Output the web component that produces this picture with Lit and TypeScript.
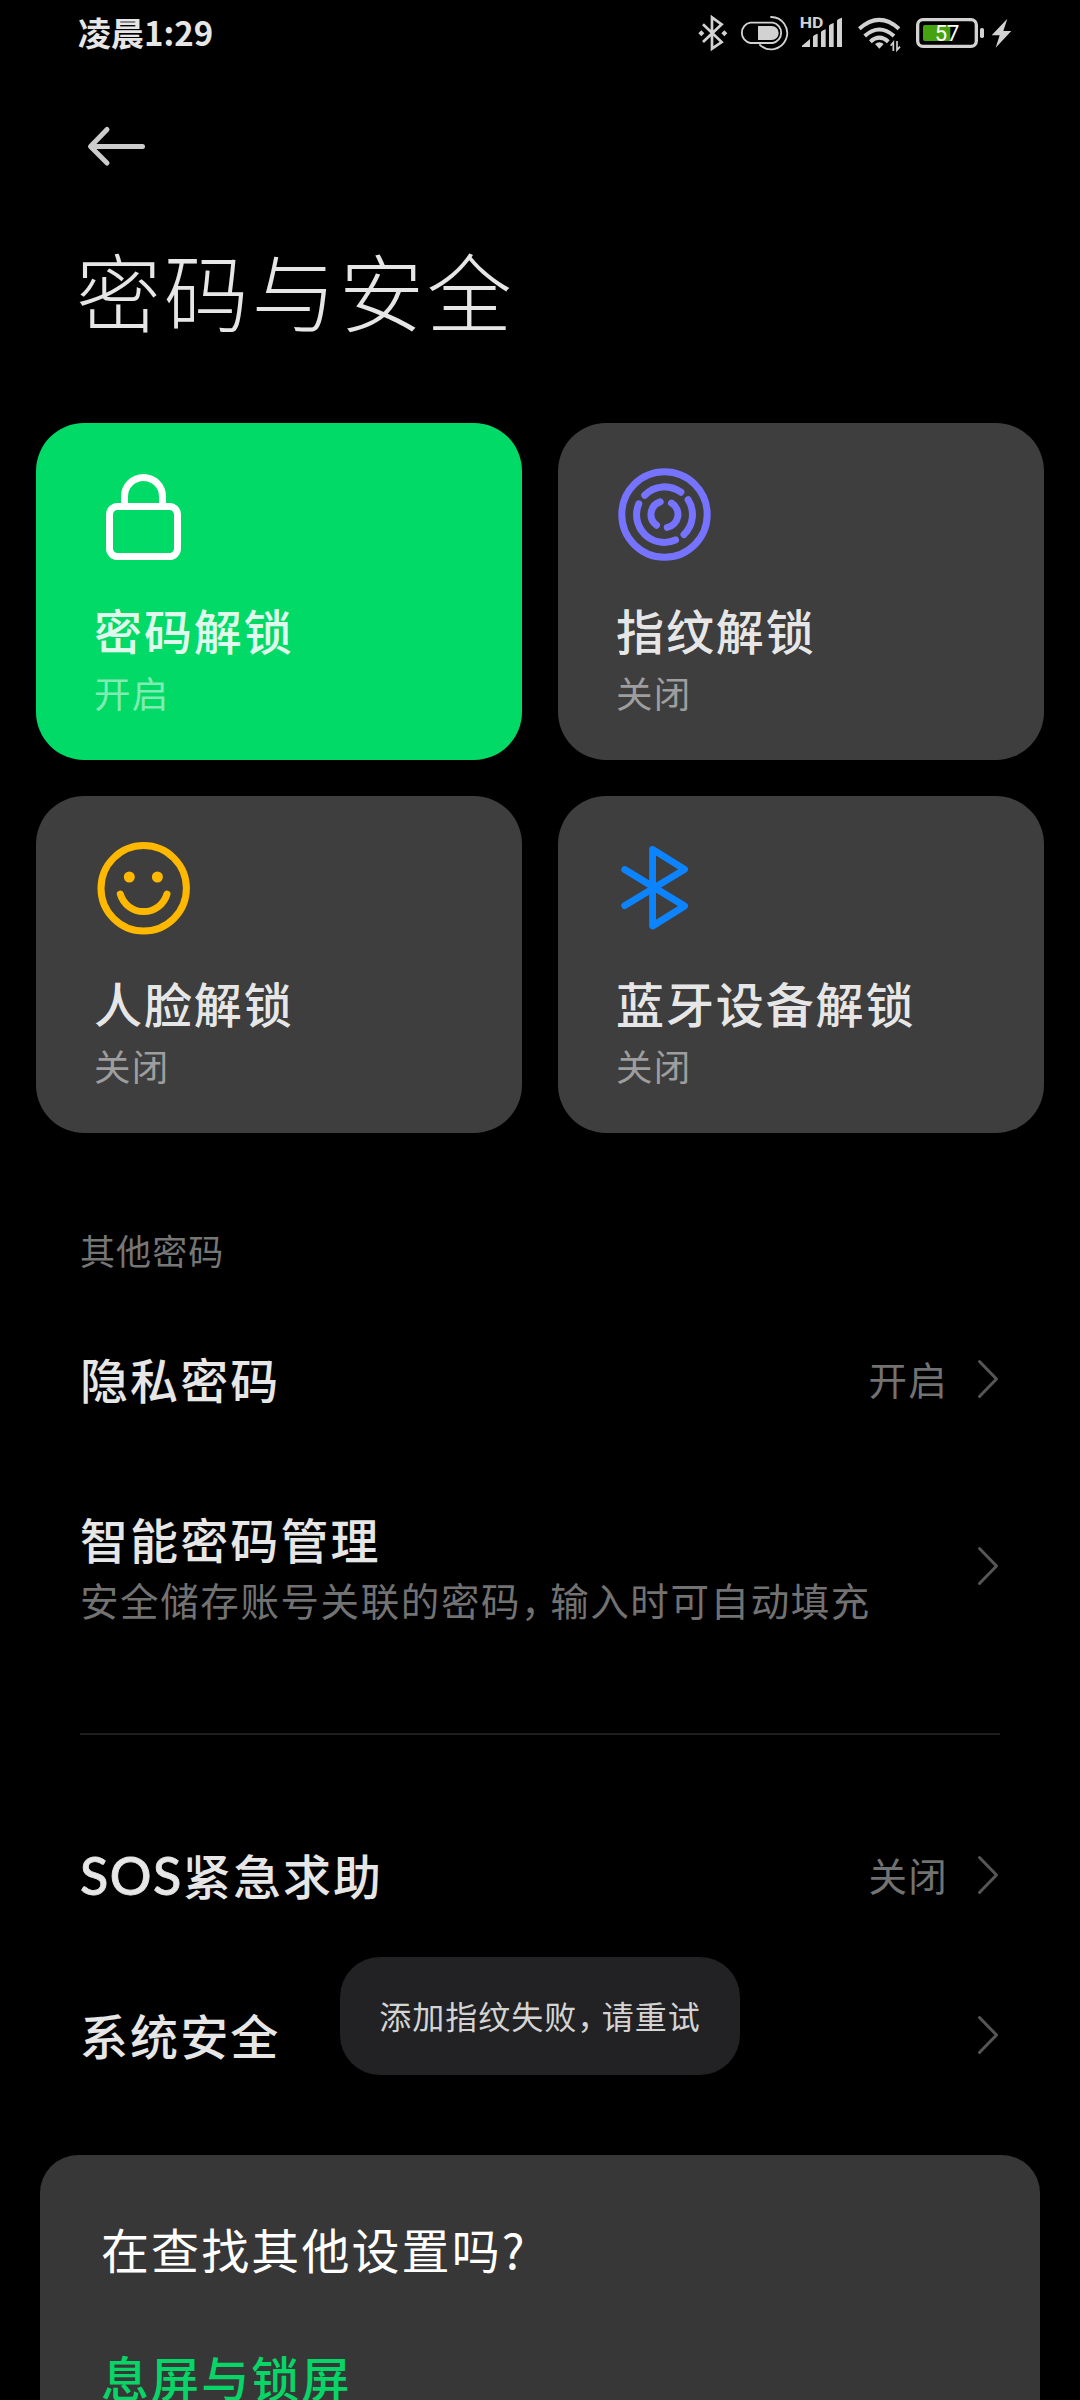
import { LitElement, html, css, svg, nothing } from "lit";
import { customElement, property } from "lit/decorators.js";

const icons: Record<string, unknown> = {
  lock: svg`<g fill="none" stroke="#fff" stroke-width="7">
    <rect x="15.5" y="41.5" width="68" height="50" rx="8"/>
    <path d="M30.5 41V31.500a19 19 0 0 1 38 0V41"/></g>`,
  fingerprint: svg`<g transform="translate(48.5 49.5)" fill="none" stroke="#7573ff" stroke-width="7" stroke-linecap="round">
    <circle r="42.700"/>
    <path d="M-19.800 -19.200A27.700 27.700 0 0 1 16.400 -22.300"/>
    <path d="M23.600 -14.800A27.700 27.700 0 0 1 19.500 20"/>
    <path d="M-25.700 -10.700A27.700 27.700 0 0 0 11 25.500"/>
    <path d="M-4.300 -12.600A13.200 13.200 0 0 0 -8 10.700"/>
    <path d="M7 -11.400A13.200 13.200 0 0 1 2.800 12.900"/></g>`,
  face: svg`<g fill="none" stroke="#ffb800" stroke-width="7" stroke-linecap="round">
    <circle cx="49.700" cy="50.300" r="42.700"/>
    <path d="M26.300 56A24.300 24.300 0 0 0 73 56"/>
    <g fill="#ffb800" stroke="none"><circle cx="35.300" cy="39" r="5.500"/><circle cx="63.400" cy="39" r="5.500"/></g></g>`,
  bluetooth: svg`<path fill="none" stroke="#0d84ff" stroke-width="6.800" stroke-linecap="round" stroke-linejoin="round"
    d="M8.700 31.500L68.600 68L36.600 88V11.300L68.600 31.300L8.700 67.700"/>`,
};

@customElement("status-bar")
class StatusBar extends LitElement {
  static styles = css`
    :host { display: flex; justify-content: space-between; height: 70px; padding: 0 67px 0 78px; }
    .time { font-size: 33px; font-weight: 700; line-height: 64px; color: #e6e6e6; letter-spacing: 0; }
    .icons { display: flex; }
    svg { height: 70px; display: block; }
    .g8 { margin-left: 8px; } .g11 { margin-left: 11px; } .g14 { margin-left: 14px; } .g5 { margin-left: 5px; }
  `;
  render() {
    return html`
      <div class="time">凌晨1:29</div>
      <div class="icons">
        <svg width="34" viewBox="48 0 102 210">
          <path d="M69 73L125 126L96 146V52L125 73L69 126" fill="none" stroke="#d2d2d2" stroke-width="8" stroke-linejoin="miter"/>
          <path d="M55 100l9-9 9 9-9 9zM124 100l9-9 9 9-9 9z" fill="#d2d2d2"/>
        </svg>
        <svg class="g8" width="51" viewBox="174 0 153 210">
          <g fill="none" stroke="#d2d2d2" stroke-width="5.500">
            <path d="M211 68H278A31 31 0 0 1 278 129H211A31 31 0 0 1 211 68Z"/>
            <path d="M271 51A48.500 48.500 0 1 1 238 133"/></g>
          <path d="M234 78H275A21 21 0 0 1 275 120H234Z" fill="#d2d2d2"/>
        </svg>
        <svg class="g11" width="43" viewBox="360 0 129 210">
          <text x="359" y="84" font-size="45" font-weight="700" textLength="71" lengthAdjust="spacingAndGlyphs" fill="#d2d2d2" font-family="Roboto, sans-serif">HD</text>
          <path fill="#d2d2d2" d="M366 137l24-20v24h-24zM399 110q0-4 14-9v40h-14zM423 97q0-4 14-9v53h-14zM447 78q0-4 14-9v72h-14zM471 62q0-5 15-9v88h-15z"/>
        </svg>
        <svg class="g14" width="44" viewBox="531 0 132 210">
          <g fill="none" stroke="#d2d2d2" stroke-width="12">
            <path d="M538 86Q598 33 657 86"/><path d="M554 108Q598 69 642 108"/><path d="M571 125Q598 101 625 125"/></g>
          <path d="M585 132Q598 122 611 132L598 146Z" fill="#d2d2d2"/>
          <path d="M640 153V127L632 137M651 123V150L660 140" fill="none" stroke="#d2d2d2" stroke-width="5"/>
        </svg>
        <svg class="g14" width="70" viewBox="705 0 210 210">
          <rect x="713" y="59" width="176" height="80" rx="16" fill="none" stroke="#d2d2d2" stroke-width="10"/>
          <path d="M735 75H811V123H735Q729 123 729 117V81Q729 75 735 75Z" fill="#46a310"/>
          <rect x="900" y="84" width="12" height="30" rx="5" fill="#d2d2d2"/>
          <text x="801" y="124" text-anchor="middle" font-size="66" font-weight="400" fill="#fff" font-family="Roboto, sans-serif">57</text>
        </svg>
        <svg class="g5" width="23" viewBox="930 0 69 210">
          <path d="M982 56L935 106H959L947 143L994 93H970Z" fill="#d2d2d2"/>
        </svg>
      </div>`;
  }
}

@customElement("unlock-card")
class UnlockCard extends LitElement {
  @property() icon = "";
  @property() name = "";
  @property() status = "";
  @property({ type: Boolean, reflect: true }) active = false;
  static styles = css`
    :host { display: block; box-sizing: border-box; height: 337px; padding: 42px 58px 0; border-radius: 48px; background: #3e3e3e; }
    :host([active]) { background: #02da68; }
    svg { display: block; width: 100px; height: 100px; }
    .name { margin-top: 34px; font-size: 48px; letter-spacing: 1.900px; line-height: 60px; font-weight: 500; color: rgba(255, 255, 255, 0.900); white-space: nowrap; }
    .status { margin-top: 9px; font-size: 36.500px; letter-spacing: 1.200px; line-height: 50px; color: #9e9e9e; }
    :host([active]) .status { color: rgba(255, 255, 255, 0.500); }
  `;
  render() {
    return html`<svg viewBox="0 0 100 100">${icons[this.icon]}</svg>
      <div class="name">${this.name}</div>
      <div class="status">${this.status}</div>`;
  }
}

@customElement("setting-row")
class SettingRow extends LitElement {
  @property() value = "";
  static styles = css`
    :host { display: flex; align-items: center; height: 160px; padding: 0 80px; }
    .text { flex: 1; }
    .value { margin-right: 28px; font-size: 38.500px; letter-spacing: 1.200px; line-height: 60px; padding-bottom: 3px; color: #727272; }
    svg { display: block; width: 24px; height: 42px; }
  `;
  render() {
    return html`<div class="text"><slot></slot></div>
      ${this.value ? html`<div class="value">${this.value}</div>` : nothing}
      <svg viewBox="0 0 24 42"><path d="M3.500 3.500L20.500 21L3.500 38.500" fill="none" stroke="#565656" stroke-width="3" stroke-linecap="round" stroke-linejoin="round"/></svg>`;
  }
}

@customElement("app-root")
class AppRoot extends LitElement {
  static styles = css`
    :host { display: block; position: relative; width: 1080px; height: 2400px; overflow: hidden; background: #000;
      font-family: "Noto Sans CJK SC", "Noto Sans", sans-serif; color: #e6e6e6; }
    .back { display: block; width: 70px; height: 60px; margin: 46px 0 0 82px; }
    h1 { margin: 63px 0 84px 76px; font-size: 85px; font-weight: 200; letter-spacing: 2.700px; line-height: 100px; }
    .cards { display: grid; grid-template-columns: 1fr 1fr; gap: 36px; margin: 0 36px; }
    .section { margin: 92px 80px 24px; font-size: 35px; letter-spacing: 1.100px; line-height: 50px; color: #767676; }
    .title { font-size: 48px; letter-spacing: 2.100px; line-height: 64px; font-weight: 500; }
    .solo { padding-bottom: 3px; }
    .latin { font-family: Lato, sans-serif; font-size: 52px; letter-spacing: 1.500px; line-height: 1; -webkit-text-stroke: 0.800px currentColor; }
    .desc { margin-top: 2px; font-size: 38.500px; letter-spacing: 1.600px; line-height: 54px; color: #727272; white-space: nowrap; }
    .desc .comma { letter-spacing: -9.500px; }
    .tall { height: 214px; }
    .divider { height: 2px; margin: 60px 80px; background: #1e1e1e; }
    .more { margin: 40px 40px 0; padding: 63px 61px 0; height: 300px; border-radius: 38px; background: #373737; }
    .question { font-size: 48px; letter-spacing: 2.100px; line-height: 60px; color: #fff; }
    .link { margin-top: 68px; font-size: 48px; letter-spacing: 2.100px; line-height: 60px; font-weight: 500; color: #07d568; }
    .toast { position: absolute; left: 340px; top: 1957px; width: 400px; height: 118px; border-radius: 40px; background: #222224;
      text-align: center; font-size: 32px; letter-spacing: 1px; line-height: 116px; color: #d4d4d4; white-space: nowrap; }
    .toast .comma { letter-spacing: -7.500px; }
  `;
  render() {
    return html`
      <status-bar></status-bar>
      <svg class="back" viewBox="0 0 70 60"><path d="M60.500 30.500H9M25 13.500L8.500 30.500L25 47" fill="none" stroke="#ccc" stroke-width="5" stroke-linecap="round" stroke-linejoin="round"/></svg>
      <h1>密码与安全</h1>
      <div class="cards">
        <unlock-card active icon="lock" name="密码解锁" status="开启"></unlock-card>
        <unlock-card icon="fingerprint" name="指纹解锁" status="关闭"></unlock-card>
        <unlock-card icon="face" name="人脸解锁" status="关闭"></unlock-card>
        <unlock-card icon="bluetooth" name="蓝牙设备解锁" status="关闭"></unlock-card>
      </div>
      <div class="section">其他密码</div>
      <setting-row value="开启"><div class="title solo">隐私密码</div></setting-row>
      <setting-row class="tall">
        <div class="title">智能密码管理</div>
        <div class="desc">安全储存账号关联的密码<span class="comma">，</span>输入时可自动填充</div>
      </setting-row>
      <div class="divider"></div>
      <setting-row value="关闭"><div class="title solo"><span class="latin">SOS</span>紧急求助</div></setting-row>
      <setting-row><div class="title solo">系统安全</div></setting-row>
      <div class="more">
        <div class="question">在查找其他设置吗?</div>
        <div class="link">息屏与锁屏</div>
      </div>
      <div class="toast">添加指纹失败<span class="comma">，</span>请重试</div>`;
  }
}
